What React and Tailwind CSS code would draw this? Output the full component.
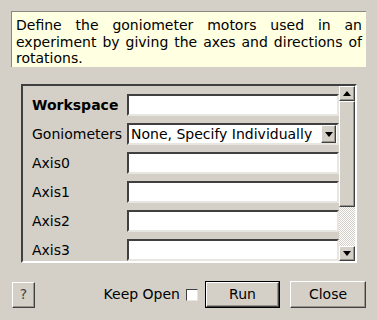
import { useState } from "react";

const sunken =
  "border-2 border-t-[#404040] border-l-[#404040] border-r-[#e8e6e1] border-b-[#e8e6e1]";
const raised =
  "border border-t-white border-l-white border-r-[#404040] border-b-[#404040] shadow-[inset_-1px_-1px_0_#9a968f]";

function Field({ value = "" }) {
  return (
    <div className={`w-[212px] h-[22px] bg-white ${sunken} flex items-center px-[2px]`}>
      {value}
    </div>
  );
}

function Arrow({ up }) {
  return (
    <div className={`w-[16px] h-[15px] bg-[#d4d0c8] ${raised} flex items-center justify-center`}>
      <svg width="8" height="5" viewBox="0 0 8 5">
        {up ? <polygon points="0,5 8,5 4,0" fill="#000" /> : <polygon points="0,0 8,0 4,5" fill="#000" />}
      </svg>
    </div>
  );
}

export default function App() {
  const [keepOpen, setKeepOpen] = useState(false);
  const axes = ["Axis0", "Axis1", "Axis2", "Axis3"];

  return (
    <div className="w-[377px] h-[320px] bg-[#d4d0c8] font-['DejaVu_Sans',sans-serif] text-[14px] text-black overflow-hidden">
      {/* info box */}
      <div className="ml-[11px] mt-[11px] w-[355px] h-[56px] bg-[#ffffe1] border-l border-t border-[#8a8780] px-[4px] pt-[5px] leading-[16.5px] text-justify">
        Define the goniometer motors used in an experiment by giving the axes and directions of rotations.
      </div>

      {/* scroll frame */}
      <div className="ml-[21px] mt-[17px] w-[336px] h-[179px] border-2 border-t-[#404040] border-l-[#404040] border-r-white border-b-white flex">
        <div className="flex-1 overflow-hidden flex flex-col gap-[7px] pt-[8px] pl-[9px]">
          <div className="flex items-center h-[22px] shrink-0">
            <span className="w-[95px] font-bold">Workspace</span>
            <Field />
          </div>
          <div className="flex items-center h-[22px] shrink-0">
            <span className="w-[95px]">Goniometers</span>
            <div className={`w-[212px] h-[22px] bg-white ${sunken} flex items-center pl-[2px] pr-[1px]`}>
              <span className="flex-1">None, Specify Individually</span>
              <div className={`w-[15px] h-[18px] bg-[#d4d0c8] ${raised} flex items-center justify-center`}>
                <svg width="8" height="5" viewBox="0 0 8 5">
                  <polygon points="0,0 8,0 4,5" fill="#000" />
                </svg>
              </div>
            </div>
          </div>
          {axes.map((a) => (
            <div key={a} className="flex items-center h-[22px] shrink-0">
              <span className="w-[95px]">{a}</span>
              <Field />
            </div>
          ))}
        </div>
        {/* scrollbar */}
        <div className="w-[16px] flex flex-col">
          <Arrow up />
          <div className={`h-[106px] bg-[#d4d0c8] ${raised}`} />
          <div className="flex-1 bg-[repeating-conic-gradient(#ffffff_0_25%,#d4d0c8_0_50%)] bg-[length:2px_2px]" />
          <Arrow />
        </div>
      </div>

      {/* bottom bar */}
      <div className="flex items-center mt-[18px] pl-[12px] pr-[11px] h-[27px]">
        <button className={`w-[23px] h-[26px] bg-[#d4d0c8] ${raised} text-[#444] text-[14px]`}>?</button>
        <span className="ml-auto">Keep Open</span>
        <button
          onClick={() => setKeepOpen(!keepOpen)}
          className="ml-[6px] w-[12px] h-[12px] bg-white border border-t-[#404040] border-l-[#404040] border-r-[#e8e6e1] border-b-[#e8e6e1]"
        >
          {keepOpen ? "✓" : ""}
        </button>
        <div className="ml-[7px] border border-black">
          <button className={`w-[73px] h-[25px] bg-[#d4d0c8] ${raised}`}>Run</button>
        </div>
        <button className={`ml-[10px] w-[76px] h-[27px] bg-[#d4d0c8] ${raised}`}>Close</button>
      </div>
    </div>
  );
}
